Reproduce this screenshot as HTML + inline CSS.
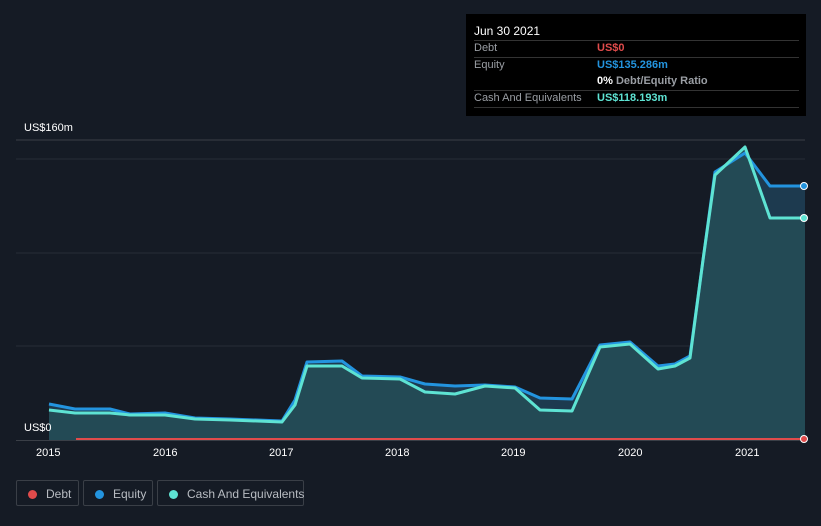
<!DOCTYPE html>
<html><head><style>
body{margin:0;width:821px;height:526px;background:#151b25;font-family:"Liberation Sans",sans-serif;overflow:hidden;position:relative}
.tt{position:absolute;left:466px;top:14px;width:340px;height:102px;background:#000;}
.tt .h{position:absolute;left:8px;top:10px;color:#fff;font-size:12px}
.row{position:absolute;left:8px;width:325px;border-top:1px solid #333;height:16px;font-size:11px;color:#9a9ea4}
.row span{position:absolute;left:123px;font-weight:bold;white-space:nowrap}
.lg{position:absolute;top:480px;height:26px;border:1px solid #3a3f47;border-radius:2px;color:#b8bcc2;font-size:12px;line-height:26px;box-sizing:border-box;white-space:nowrap}
.lg i{display:inline-block;width:9px;height:9px;border-radius:50%;margin:0 9px 0 11px;vertical-align:-1px}
.ax{position:absolute;color:#fff;font-size:11px}
</style></head><body>
<svg width="821" height="526" style="position:absolute;left:0;top:0">
<line x1="16" y1="140" x2="805" y2="140" stroke="#3a3f47"/>
<line x1="16" y1="159" x2="805" y2="159" stroke="#262c36"/>
<line x1="16" y1="253" x2="805" y2="253" stroke="#262c36"/>
<line x1="16" y1="346" x2="805" y2="346" stroke="#262c36"/>
<line x1="16" y1="440.5" x2="805" y2="440.5" stroke="#3a3f47"/>
<polygon fill="#1d3a4f" points="49,404 75,409 110,409 130,414 165,413 195,418 230,419 282,421 295,400 307,362 342,361 362,376 400,377 425,384 455,386 485,385 515,387 540,398 572,399 600,345 630,342 658,366 675,364 690,356 703,260 715,172 745,153 770,186 805,186 805,440 49,440"/>
<polygon fill="#234a55" points="49,410 75,413 110,413 130,415 165,415 195,419 230,420 282,422 295,405 307,366 342,366 362,378 400,379 425,392 455,394 485,386 515,388 540,410 572,411 600,347 630,344 658,369 675,366 690,358 703,260 715,175 745,147 770,218 805,218 805,440 49,440"/>
<polyline fill="none" stroke="#2394df" stroke-width="3" stroke-linejoin="round" points="49,404 75,409 110,409 130,414 165,413 195,418 230,419 282,421 295,400 307,362 342,361 362,376 400,377 425,384 455,386 485,385 515,387 540,398 572,399 600,345 630,342 658,366 675,364 690,356 703,260 715,172 745,153 770,186 805,186"/>
<polyline fill="none" stroke="#5ee3d3" stroke-width="3" stroke-linejoin="round" points="49,410 75,413 110,413 130,415 165,415 195,419 230,420 282,422 295,405 307,366 342,366 362,378 400,379 425,392 455,394 485,386 515,388 540,410 572,411 600,347 630,344 658,369 675,366 690,358 703,260 715,175 745,147 770,218 805,218"/>
<line x1="76" y1="439" x2="805" y2="439" stroke="#e04b4b" stroke-width="2"/>
<circle cx="804" cy="186" r="3.5" fill="#2394df" stroke="#fff" stroke-width="1"/>
<circle cx="804" cy="218" r="3.5" fill="#5ee3d3" stroke="#fff" stroke-width="1"/>
<circle cx="804" cy="439" r="3.5" fill="#e04b4b" stroke="#fff" stroke-width="1"/>
</svg>
<div class="ax" style="left:24px;top:122px">US$160m</div>
<div class="ax" style="left:24px;top:422px">US$0</div>
<div class="ax" style="left:36px;top:447px">2015</div>
<div class="ax" style="left:153px;top:447px">2016</div>
<div class="ax" style="left:269px;top:447px">2017</div>
<div class="ax" style="left:385px;top:447px">2018</div>
<div class="ax" style="left:501px;top:447px">2019</div>
<div class="ax" style="left:618px;top:447px">2020</div>
<div class="ax" style="left:735px;top:447px">2021</div>
<div class="tt">
<div class="h">Jun 30 2021</div>
<div class="row" style="top:26px;line-height:15px">Debt<span style="color:#e04b4b">US$0</span></div>
<div class="row" style="top:43px;line-height:15px;height:32px">Equity<span style="color:#2394df">US$135.286m</span><span style="top:16px;color:#fff">0% <b style="color:#9a9ea4">Debt/Equity Ratio</b></span></div>
<div class="row" style="top:76px;line-height:15px">Cash And Equivalents<span style="color:#5ee3d3">US$118.193m</span></div>
<div class="row" style="top:93px;height:0"></div>
</div>
<div class="lg" style="left:16px;width:63px"><i style="background:#e04b4b"></i>Debt</div>
<div class="lg" style="left:83px;width:70px"><i style="background:#2394df"></i>Equity</div>
<div class="lg" style="left:157px;width:147px"><i style="background:#5ee3d3"></i>Cash And Equivalents</div>
</body></html>
